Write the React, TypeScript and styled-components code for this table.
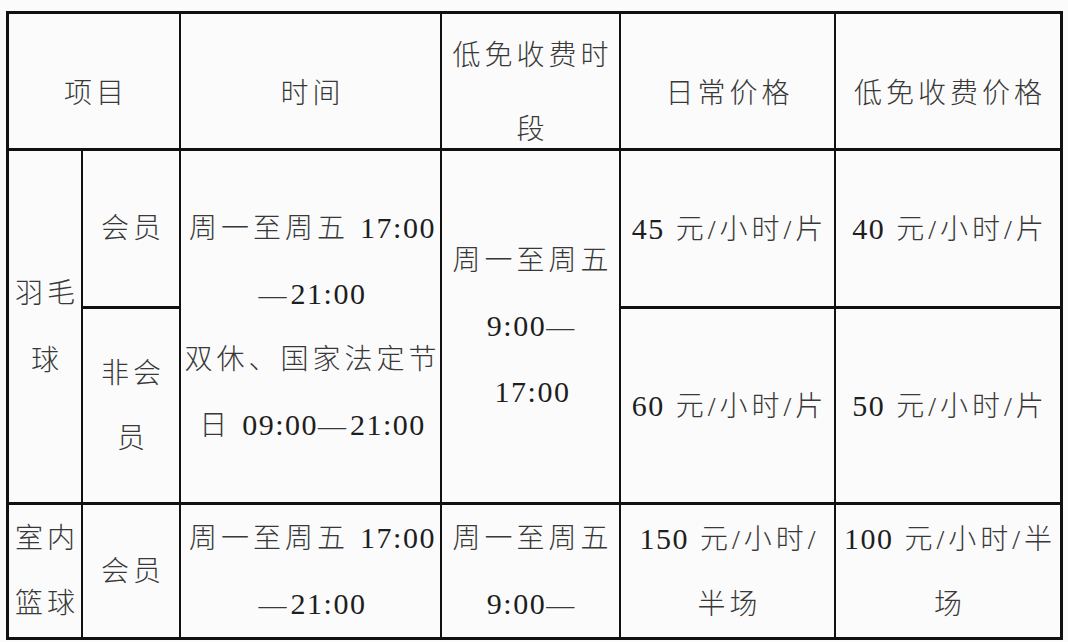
import React from "react";
import styled, { createGlobalStyle } from "styled-components";

const GlobalStyle = createGlobalStyle`
  html, body {
    margin: 0;
    padding: 0;
    background: #fbfbfb;
  }
  body {
    font-family: "Liberation Serif", "Noto Sans CJK SC", serif;
    color: #383838;
  }
`;

const Page = styled.div`
  width: 1068px;
  height: 642px;
  overflow: hidden;
  padding: 11px 0 0 6px;
  box-sizing: border-box;
`;

const Grid = styled.div`
  display: grid;
  width: max-content;
  grid-template-columns: 72px 96px 259px 177px 213px 224px;
  grid-template-rows: 134px 155px 193px 132px;
  column-gap: 2px;
  row-gap: 3px;
  padding: 3px;
  background: #111;
  grid-template-areas:
    "h1 h1 h2 h3 h4 h5"
    "a  b  t  p  x1 y1"
    "a  c  t  p  x2 y2"
    "d  e  u  q  x3 y3";
`;

const Cell = styled.div<{ $area: string; $head?: boolean; $lh?: number }>`
  grid-area: ${(p) => p.$area};
  background: #fbfbfb;
  display: flex;
  flex-direction: column;
  align-items: center;
  justify-content: center;
  padding-top: ${(p) => (p.$head ? "24px" : "0")};
  box-sizing: border-box;
  font-size: 28px;
  font-weight: 300;
  line-height: ${(p) => p.$lh ?? 65}px;
  text-align: center;
  white-space: nowrap;
`;

const Line = styled.span`
  display: block;
  letter-spacing: 4px;
  margin-right: -4px;
`;

const Num = styled.span`
  font-size: 30px;
  letter-spacing: 1.5px;
  color: #1e1e1e;
`;

const renderLine = (l: string) =>
  l.split(/([0-9:]+)/).map((part, i) =>
    /^[0-9:]+$/.test(part) ? <Num key={i}>{part}</Num> : part
  );

const Text = ({ lines }: { lines: string[] }) => (
  <>
    {lines.map((l, i) => (
      <Line key={i}>{renderLine(l)}</Line>
    ))}
  </>
);

export default function App() {
  return (
    <>
      <GlobalStyle />
      <Page>
        <Grid>
          <Cell $area="h1" $head>
            <Text lines={["项目"]} />
          </Cell>
          <Cell $area="h2" $head>
            <Text lines={["时间"]} />
          </Cell>
          <Cell $area="h3" $head $lh={74}>
            <Text lines={["低免收费时", "段"]} />
          </Cell>
          <Cell $area="h4" $head>
            <Text lines={["日常价格"]} />
          </Cell>
          <Cell $area="h5" $head>
            <Text lines={["低免收费价格"]} />
          </Cell>

          <Cell $area="a" $lh={67}>
            <Text lines={["羽毛", "球"]} />
          </Cell>
          <Cell $area="b">
            <Text lines={["会员"]} />
          </Cell>
          <Cell $area="c">
            <Text lines={["非会", "员"]} />
          </Cell>
          <Cell $area="t">
            <Text
              lines={["周一至周五 17:00", "—21:00", "双休、国家法定节", "日 09:00—21:00"]}
            />
          </Cell>
          <Cell $area="p">
            <Text lines={["周一至周五", "9:00—", "17:00"]} />
          </Cell>
          <Cell $area="x1">
            <Text lines={["45 元/小时/片"]} />
          </Cell>
          <Cell $area="y1">
            <Text lines={["40 元/小时/片"]} />
          </Cell>
          <Cell $area="x2">
            <Text lines={["60 元/小时/片"]} />
          </Cell>
          <Cell $area="y2">
            <Text lines={["50 元/小时/片"]} />
          </Cell>

          <Cell $area="d">
            <Text lines={["室内", "篮球"]} />
          </Cell>
          <Cell $area="e">
            <Text lines={["会员"]} />
          </Cell>
          <Cell $area="u">
            <Text lines={["周一至周五 17:00", "—21:00"]} />
          </Cell>
          <Cell $area="q">
            <Text lines={["周一至周五", "9:00—"]} />
          </Cell>
          <Cell $area="x3">
            <Text lines={["150 元/小时/", "半场"]} />
          </Cell>
          <Cell $area="y3">
            <Text lines={["100 元/小时/半", "场"]} />
          </Cell>
        </Grid>
      </Page>
    </>
  );
}
